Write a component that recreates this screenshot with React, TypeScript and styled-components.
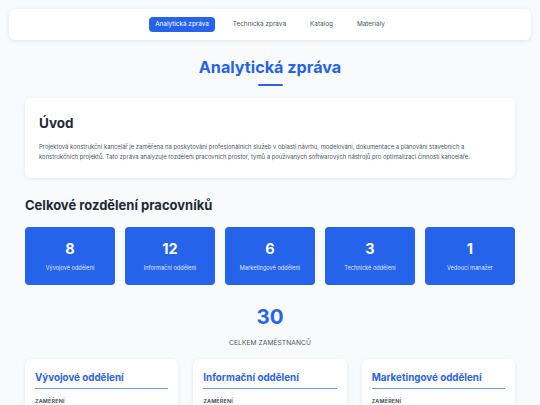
import styled, { createGlobalStyle } from 'styled-components';

const GlobalStyle = createGlobalStyle`
  * {
    box-sizing: border-box;
  }

  body {
    margin: 0;
    background: #f8fafc;
    font-family: Inter, 'Noto Sans', sans-serif;
    color: #1f2937;
  }
`;

const Page = styled.div`
  padding: 9px 9px 40px;
`;

const Nav = styled.nav`
  display: flex;
  justify-content: center;
  align-items: center;
  gap: 11px;
  height: 31px;
  background: white;
  border-radius: 6px;
  box-shadow: 0 1px 4px rgba(15, 23, 42, 0.1);
`;

const NavLink = styled.a<{ $active?: boolean }>`
  display: block;
  padding: 4px 6.5px;
  border-radius: 4px;
  font-size: 6.4px;
  line-height: 7px;
  text-decoration: none;
  color: ${({ $active }) => ($active ? 'white' : '#4b5563')};
  background: ${({ $active }) => ($active ? '#2563eb' : 'transparent')};
`;

const Main = styled.main`
  padding: 0 16px;
`;

const PageTitle = styled.h1`
  margin: 17px 0 0;
  text-align: center;
  font-size: 16.2px;
  line-height: 20px;
  font-weight: 700;
  color: #2563eb;

  &::after {
    content: '';
    display: block;
    width: 25px;
    height: 2px;
    margin: 7px auto 0;
    background: #2563eb;
    border-radius: 1px;
  }
`;

const Card = styled.section`
  margin-top: 12px;
  padding: 17px 14px 17px;
  background: white;
  border-radius: 6px;
  box-shadow: 0 1px 4px rgba(15, 23, 42, 0.08);
`;

const CardTitle = styled.h2`
  margin: 0 0 11px;
  font-size: 13.5px;
  line-height: 16px;
  font-weight: 700;
  color: #1f2937;
`;

const Paragraph = styled.p`
  margin: 0;
  font-size: 5.9px;
  line-height: 9.6px;
  color: #4b5563;
`;

const SectionTitle = styled.h2`
  margin: 19px 0 0;
  font-size: 13px;
  line-height: 16px;
  font-weight: 700;
  color: #1f2937;
`;

const StatGrid = styled.div`
  display: grid;
  grid-template-columns: repeat(5, 1fr);
  gap: 10px;
  margin-top: 14px;
`;

const StatCard = styled.div`
  display: flex;
  flex-direction: column;
  align-items: center;
  justify-content: center;
  height: 58px;
  border-radius: 4px;
  background: #2563eb;
  color: white;
`;

const StatNumber = styled.div`
  font-size: 14.5px;
  line-height: 17px;
  font-weight: 700;
`;

const StatLabel = styled.div`
  margin-top: 8px;
  font-size: 5.6px;
  line-height: 7px;
  color: rgba(255, 255, 255, 0.88);
`;

const Total = styled.div`
  margin-top: 20px;
  text-align: center;
`;

const TotalNumber = styled.div`
  font-size: 20.5px;
  line-height: 24px;
  font-weight: 700;
  color: #2563eb;
`;

const TotalLabel = styled.div`
  margin-top: 10px;
  font-size: 6.6px;
  line-height: 8px;
  letter-spacing: 0.1px;
  text-transform: uppercase;
  color: #4b5563;
`;

const DeptGrid = styled.div`
  display: grid;
  grid-template-columns: repeat(3, 1fr);
  gap: 15px;
  margin-top: 12px;
`;

const DeptCard = styled.div`
  padding: 12px 10px 14px;
  background: white;
  border-radius: 6px;
  box-shadow: 0 1px 4px rgba(15, 23, 42, 0.08);
`;

const DeptTitle = styled.h3`
  margin: 0;
  padding-bottom: 4px;
  border-bottom: 1.5px solid #6d97ec;
  font-size: 9.8px;
  line-height: 13px;
  font-weight: 700;
  color: #2d63df;
`;

const DeptLabel = styled.div`
  margin-top: 9px;
  font-size: 5.4px;
  line-height: 6px;
  letter-spacing: 0.2px;
  font-weight: 600;
  text-transform: uppercase;
  color: #374151;
`;

const STATS = [
  { value: 8, label: 'Vývojové oddělení' },
  { value: 12, label: 'Informační oddělení' },
  { value: 6, label: 'Marketingové oddělení' },
  { value: 3, label: 'Technické oddělení' },
  { value: 1, label: 'Vedoucí manažer' },
];

const DEPARTMENTS = ['Vývojové oddělení', 'Informační oddělení', 'Marketingové oddělení'];

export default function App() {
  return (
    <>
      <GlobalStyle />
      <Page>
        <Nav>
          <NavLink href="#" $active>
            Analytická zpráva
          </NavLink>
          <NavLink href="#">Technická zpráva</NavLink>
          <NavLink href="#">Katalog</NavLink>
          <NavLink href="#">Materiály</NavLink>
        </Nav>
        <Main>
          <PageTitle>Analytická zpráva</PageTitle>
          <Card>
            <CardTitle>Úvod</CardTitle>
            <Paragraph>
              Projektová konstrukční kancelář je zaměřena na poskytování profesionálních služeb v
              oblasti návrhu, modelování, dokumentace a plánování stavebních a konstrukčních
              projektů. Tato zpráva analyzuje rozdělení pracovních prostor, týmů a používaných
              softwarových nástrojů pro optimalizaci činností kanceláře.
            </Paragraph>
          </Card>
          <SectionTitle>Celkové rozdělení pracovníků</SectionTitle>
          <StatGrid>
            {STATS.map(({ value, label }) => (
              <StatCard key={label}>
                <StatNumber>{value}</StatNumber>
                <StatLabel>{label}</StatLabel>
              </StatCard>
            ))}
          </StatGrid>
          <Total>
            <TotalNumber>30</TotalNumber>
            <TotalLabel>Celkem zaměstnanců</TotalLabel>
          </Total>
          <DeptGrid>
            {DEPARTMENTS.map((name) => (
              <DeptCard key={name}>
                <DeptTitle>{name}</DeptTitle>
                <DeptLabel>Zaměření</DeptLabel>
              </DeptCard>
            ))}
          </DeptGrid>
        </Main>
      </Page>
    </>
  );
}
